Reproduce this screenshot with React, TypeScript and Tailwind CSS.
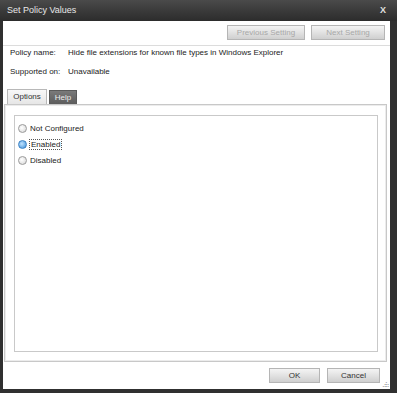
import React, { useState } from 'react';

const font = { fontFamily: '"Liberation Sans", Arial, sans-serif' };

const Radio: React.FC<{ checked?: boolean }> = ({ checked }) => (
  <span
    className={`inline-block w-[9px] h-[9px] rounded-full border ${
      checked ? 'border-[#3b82c4] bg-[radial-gradient(circle_at_40%_40%,#bfe2ff,#3d8fd8)]' : 'border-[#9a9a9a] bg-[radial-gradient(circle_at_40%_40%,#ffffff,#d4d4d4)]'
    }`}
  />
);

const GrayButton: React.FC<{ label: string; width: string; disabled?: boolean }> = ({ label, width, disabled }) => (
  <button
    className={`${width} h-[15px] border border-[#b5b5b5] bg-gradient-to-b from-[#f4f4f4] via-[#e2e2e2] to-[#cfcfcf] text-[8px] leading-none ${
      disabled ? 'text-[#a8a8a8]' : 'text-[#333]'
    }`}
  >
    {label}
  </button>
);

export default function App() {
  const [value, setValue] = useState('enabled');
  const options = [
    { id: 'not', label: 'Not Configured' },
    { id: 'enabled', label: 'Enabled' },
    { id: 'disabled', label: 'Disabled' },
  ];

  return (
    <div className="w-[397px] h-[393px] bg-[#303030] flex flex-col pl-[3px] pr-[7px] pb-[4px]" style={font}>
      {/* Title bar */}
      <div className="h-[21px] flex items-center justify-between bg-gradient-to-b from-[#4a4a4a] to-[#2c2c2c] -ml-[3px] -mr-[7px] pl-[7px] pr-[11px]">
        <span className="text-[9px] text-[#e8e8e8]">Set Policy Values</span>
        <span className="text-[9px] font-bold text-[#e0e0e0] leading-none">X</span>
      </div>

      {/* Body */}
      <div className="flex-1 bg-white flex flex-col">
        <div className="flex justify-end gap-[6px] pt-[4px] pr-[5px]">
          <GrayButton label="Previous Setting" width="w-[78px]" disabled />
          <GrayButton label="Next Setting" width="w-[74px]" disabled />
        </div>
        <div className="mt-[5px] h-px bg-[#dcdcdc]" />

        <div className="pl-[7px] pt-[2px] text-[8px] text-[#222] flex flex-col gap-[9px]">
          <div className="flex h-[10px] items-center">
            <span className="w-[58px]">Policy name:</span>
            <span>Hide file extensions for known file types in Windows Explorer</span>
          </div>
          <div className="flex h-[10px] items-center">
            <span className="w-[58px]">Supported on:</span>
            <span>Unavailable</span>
          </div>
        </div>

        {/* Tabs */}
        <div className="flex items-end pl-[4px] mt-[12px] h-[15px] gap-[2px]">
          <div className="h-[15px] w-[40px] border border-b-0 border-[#b8b8b8] bg-gradient-to-b from-[#f8f8f8] to-[#e6e6e6] text-[8px] text-[#333] flex items-center justify-center">
            Options
          </div>
          <div className="h-[14px] w-[28px] border border-b-0 border-[#5a5a5a] bg-gradient-to-b from-[#7a7a7a] to-[#5c5c5c] text-[8px] text-[#eee] flex items-center justify-center">
            Help
          </div>
        </div>

        {/* Panel */}
        <div className="ml-[1px] mr-[3px] h-[258px] border border-[#c8c8c8] shadow-[inset_0_0_0_1px_#ececec] bg-white pt-[10px] pl-[9px] pr-[8px] pb-[9px] flex">
          <div className="flex-1 border border-[#c9c9c9] pt-[7px] pl-[3px] flex flex-col gap-[5px]">
            {options.map((o) => (
              <label key={o.id} className="flex items-center gap-[2px] h-[11px] text-[8px] text-[#222] cursor-pointer" onClick={() => setValue(o.id)}>
                <Radio checked={value === o.id} />
                <span className={value === o.id ? 'border border-dotted border-[#555] px-[1px] leading-[9px]' : 'px-[1px]'}>{o.label}</span>
              </label>
            ))}
          </div>
        </div>

        {/* Footer */}
        <div className="flex justify-end gap-[7px] pt-[6px] pr-[10px] relative flex-1">
          <GrayButton label="OK" width="w-[51px]" />
          <GrayButton label="Cancel" width="w-[53px]" />
          <span className="absolute right-[2px] bottom-[1px] text-[6px] leading-none text-[#777] tracking-[-1px]">⠴⠷</span>
        </div>
      </div>
    </div>
  );
}
